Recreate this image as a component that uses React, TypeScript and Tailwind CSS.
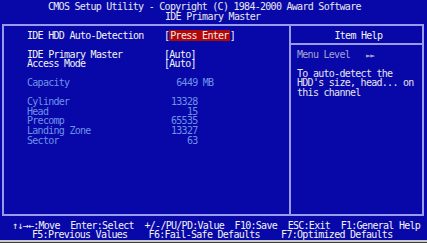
const rows: { label: string; value?: string; unit?: string; dim?: boolean }[] = [
  { label: "Cylinder", value: "13328", dim: true },
  { label: "Head", value: "15", dim: true },
  { label: "Precomp", value: "65535", dim: true },
  { label: "Landing Zone", value: "13327", dim: true },
  { label: "Sector", value: "63", dim: true },
];

function Line({ children, className = "" }: { children?: React.ReactNode; className?: string }) {
  return <div className={`h-[9.55px] leading-[9.55px] whitespace-pre ${className}`}>{children ?? " "}</div>;
}

export default function App() {
  return (
    <div
      className="w-[427px] h-[250px] bg-white overflow-hidden text-[10px] tracking-[-0.72px] text-[#f2f2f2]"
      style={{ fontFamily: '"DejaVu Sans Mono", "Liberation Mono", monospace' }}
    >
      <div className="h-[240px] bg-[#0808a8] flex flex-col">
        {/* title */}
        <div className="h-[24px] pt-[2px] text-[#e8e8f0]">
          <Line className="pl-[48px]">CMOS Setup Utility - Copyright (C) 1984-2000 Award Software</Line>
          <Line className="pl-[165px]">IDE Primary Master</Line>
        </div>

        {/* main box */}
        <div className="ml-[2px] w-[422px] h-[193px] border-2 border-[#9a9aec] flex">
          <div className="w-[286.7px] border-r-2 border-[#9a9aec] pt-[4.6px] pl-[23px]">
            <div className="flex h-[9.55px] leading-[9.55px]">
              <span className="w-[137px] whitespace-pre">IDE HDD Auto-Detection</span>
              <span className="whitespace-pre">
                [<span className="bg-[#b00808] text-[#f4e8e8] px-[1px]">Press Enter</span>]
              </span>
            </div>
            <Line />
            <div className="flex h-[9.55px] leading-[9.55px]">
              <span className="w-[137px] whitespace-pre">IDE Primary Master</span>
              <span>[Auto]</span>
            </div>
            <div className="flex h-[9.55px] leading-[9.55px]">
              <span className="w-[137px] whitespace-pre">Access Mode</span>
              <span>[Auto]</span>
            </div>
            <Line />
            <div className="flex h-[9.55px] leading-[9.55px] text-[#6f92e8]">
              <span className="w-[137px] whitespace-pre">Capacity</span>
              <span className="w-[33.5px] text-right">6449</span>
              <span className="whitespace-pre"> MB</span>
            </div>
            <Line />
            {rows.map((r) => (
              <div key={r.label} className="flex h-[9.55px] leading-[9.55px] text-[#6f92e8]">
                <span className="w-[137px] whitespace-pre">{r.label}</span>
                <span className="w-[33.5px] text-right">{r.value}</span>
              </div>
            ))}
          </div>

          <div className="flex-1 pt-[4.6px]">
            <Line className="text-center pl-[4px]">Item Help</Line>
            <div className="mt-[2.55px] border-t-2 border-[#9a9aec]" />
            <div className="pt-[4.97px] pl-[6.3px]">
              <Line className="text-[#a4a4d4]">
                Menu Level   <span className="text-[8px] tracking-[-0.5px]">►►</span>
              </Line>
              <Line />
              <div className="text-[#e4e4f0]">
                <Line>To auto-detect the</Line>
                <Line>HDD's size, head... on</Line>
                <Line>this channel</Line>
              </div>
            </div>
          </div>
        </div>

        {/* footer */}
        <div className="pt-[4.6px]">
          <Line className="pl-[12px]">↑↓→←:Move  Enter:Select  +/-/PU/PD:Value  F10:Save  ESC:Exit  F1:General Help</Line>
          <Line className="pl-[32px]">F5:Previous Values    F6:Fail-Safe Defaults    F7:Optimized Defaults</Line>
        </div>
      </div>
      <div className="h-[2px] bg-[#c8c8cc]" />
      <div className="h-[1px] bg-[#404040]" />
    </div>
  );
}
